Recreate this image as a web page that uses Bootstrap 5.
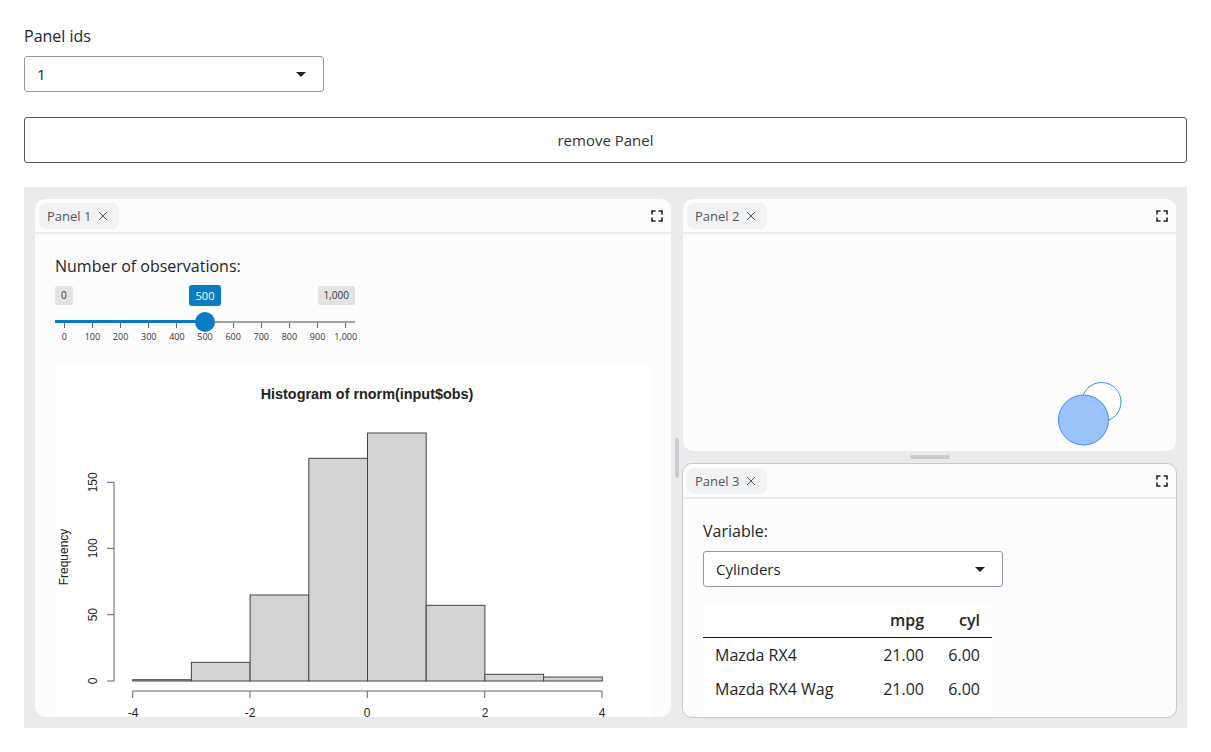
<!DOCTYPE html>
<html lang="en">
<head>
<meta charset="UTF-8">
<title>Panels</title>
<link rel="stylesheet" href="https://cdn.jsdelivr.net/npm/bootstrap@5.3.0/dist/css/bootstrap.min.css">
<style>
    html, body { height: 100%; }
    body {
        font-family: "Open Sans", "Liberation Sans", sans-serif;
        font-size: 16px;
        color: #212529;
        background: #fff;
        overflow: hidden;
    }
    .page-wrap { padding: 24px; }
    .field-label { font-size: 16px; line-height: 24px; margin-bottom: 8px; display: block; }
    .dd-select {
        width: 300px;
        height: 36px;
        font-size: 15px;
        line-height: 20px;
        padding: 6px 36px 6px 12px;
        border: 1px solid #8f9aa6;
        border-radius: 3px;
        color: #212529;
        background-image: url("data:image/svg+xml,%3csvg xmlns='http://www.w3.org/2000/svg' viewBox='0 0 10 5'%3e%3cpath fill='%23222' d='M0 0h10L5 5z'/%3e%3c/svg%3e");
        background-position: right 17px center;
        background-size: 10px 5px;
    }
    .remove-btn {
        height: 46px;
        margin: 25px 0 24px;
        font-size: 15px;
        font-weight: 500;
        color: #333;
        background: #fff;
        border: 1px solid #555;
        border-radius: 3px;
    }
    .dock {
        height: 541px;
        padding: 12px 11px 11px;
        gap: 12px;
        background: #e9ebed;
    }
    .dock-col-left { width: 636px; }
    .dock-col-right { width: 493px; gap: 12px; }
    .pane {
        background: #fcfcfc;
        border-radius: 10px;
        overflow: hidden;
        min-height: 0;
    }
    .pane-top { height: 252px; flex: none; }
    .pane-bottom { flex: 1; border: 1px solid #c9c9c9; margin: 0 -1px -1px -1px; }
    .pane-head {
        height: 35px;
        flex: none;
        padding: 4px 8px 0 4px;
        border-bottom: 2px solid #e9ebed;
    }
    .pane-tab {
        height: 26px;
        padding: 2px 11px 0 8px;
        gap: 7px;
        font-size: 13px;
        color: #555;
        background: #f1f2f3;
        border-radius: 7px;
    }
    .pane-tab svg { margin-top: -3px; }
    .pane-body { padding: 20px; min-height: 0; }
    .obs-label { font-size: 16px; line-height: 24px; margin: 0 0 7px; }
    .range-box { width: 300px; position: relative; }
    .range-ends { height: 21px; padding-top: 1px; }
    .range-end {
        font-size: 10px;
        line-height: 19px;
        height: 19px;
        padding: 0 6px;
        color: #333;
        background: #e3e3e3;
        border-radius: 2px;
    }
    .range-value {
        position: absolute;
        top: 0;
        left: 134px;
        width: 32px;
        height: 21px;
        font-size: 11px;
        font-weight: 500;
        line-height: 21px;
        text-align: center;
        color: #fff;
        background: #0a7cc4;
        border-radius: 3px;
    }
    .range-track { height: 3px; margin-top: 14px; background: linear-gradient(#a3a3a3, #a3a3a3) center / 100% 2px no-repeat; position: relative; }
    .range-fill { width: 50%; height: 100%; background: #0a7cc4; }
    .range-knob {
        position: absolute;
        left: 140px;
        top: -8.5px;
        width: 20px;
        height: 20px;
        border-radius: 50%;
        background: #0a7cc4;
    }
    .range-ticks { margin: 0 9.3px; height: 24px; }
    .range-tick { width: 0; position: relative; display: flex; flex-direction: column; align-items: center; }
    .range-tick i { display: block; width: 1px; height: 5px; flex: none; background: #666; }
    .range-tick span { font-size: 9px; line-height: 12px; margin-top: 3px; color: #333; white-space: nowrap; }
    .plot-box { width: 596px; height: 400px; margin-top: 17px; background: #fff; flex: none; }
    .plot-box svg { display: block; }
    .plot-box text { font-family: "Liberation Sans", Arial, sans-serif; fill: #222; }
    .var-label { font-size: 16px; line-height: 24px; margin: 0 0 8px; }
    .cars-wrap { width: 289px; margin-top: 16px; background: #fff; }
    .cars-table { margin: 0; font-size: 16px; table-layout: fixed; --bs-table-bg: #fff; }
    .cars-table th, .cars-table td {
        padding: 1px 12px 0;
        height: 34px;
        border: 0;
        vertical-align: middle;
        white-space: nowrap;
    }
    .cars-table th { font-weight: 600; border-bottom: 1px solid #111; padding-top: 0; }
    .col-name { width: 161px; }
    .col-mpg { width: 72px; }
    .col-cyl { width: 56px; }
    .circles-svg { margin: 0 52px 3px 0; }
    .sash-v, .sash-h { position: absolute; background: #c9cbce; border-radius: 2px; }
    .sash-v { left: 675px; top: 438px; width: 4px; height: 40px; }
    .sash-h { left: 910px; top: 455px; width: 40px; height: 4px; }
    .max-icon { flex: none; margin-top: 7px; }
</style>
</head>
<body>
<div class="page-wrap">
    <label class="field-label" for="panelIds">Panel ids</label>
    <select class="form-select dd-select" id="panelIds">
        <option>1</option>
        <option>2</option>
        <option>3</option>
    </select>
    <button type="button" class="btn remove-btn w-100 d-block">remove Panel</button>

    <div class="dock d-flex">
        <div class="dock-col-left d-flex">
            <div class="pane d-flex flex-column w-100">
                <div class="pane-head d-flex justify-content-between align-items-start">
                    <span class="pane-tab d-inline-flex align-items-center">Panel 1
                        <svg width="10" height="10" viewBox="0 0 10 10"><path d="M1 1l8 8M9 1l-8 8" stroke="#555" fill="none"/></svg>
                    </span>
                    <svg class="max-icon" width="12" height="12" viewBox="0 0 12 12"><path d="M1 4.5V1h3.5M7.5 1H11v3.5M11 7.5V11H7.5M4.5 11H1V7.5" stroke="#222" stroke-width="1.6" fill="none"/></svg>
                </div>
                <div class="pane-body">
                    <p class="obs-label">Number of observations:</p>
                    <div class="range-box">
                        <div class="range-ends d-flex justify-content-between align-items-start">
                            <span class="range-end">0</span>
                            <span class="range-end">1,000</span>
                        </div>
                        <span class="range-value">500</span>
                        <div class="range-track">
                            <div class="range-fill"></div>
                            <div class="range-knob"></div>
                        </div>
                        <div class="range-ticks d-flex justify-content-between">
                            <div class="range-tick"><i></i><span>0</span></div>
                            <div class="range-tick"><i></i><span>100</span></div>
                            <div class="range-tick"><i></i><span>200</span></div>
                            <div class="range-tick"><i></i><span>300</span></div>
                            <div class="range-tick"><i></i><span>400</span></div>
                            <div class="range-tick"><i></i><span>500</span></div>
                            <div class="range-tick"><i></i><span>600</span></div>
                            <div class="range-tick"><i></i><span>700</span></div>
                            <div class="range-tick"><i></i><span>800</span></div>
                            <div class="range-tick"><i></i><span>900</span></div>
                            <div class="range-tick"><i></i><span>1,000</span></div>
                        </div>
                    </div>
                    <div class="plot-box">
                        <svg width="596" height="400" viewBox="55 364 596 400">
                            <text x="367" y="399" text-anchor="middle" font-size="14.4" font-weight="700">Histogram of rnorm(input$obs)</text>
                            <g fill="#d3d3d3" stroke="#444" stroke-width="1">
                                <rect x="132.7" y="679.7" width="58.7" height="1.3"/>
                                <rect x="191.4" y="662.3" width="58.7" height="18.7"/>
                                <rect x="250.1" y="595" width="58.7" height="86"/>
                                <rect x="308.8" y="458.3" width="58.7" height="222.7"/>
                                <rect x="367.5" y="433" width="58.7" height="248"/>
                                <rect x="426.2" y="605.3" width="58.7" height="75.7"/>
                                <rect x="484.9" y="674.3" width="58.7" height="6.7"/>
                                <rect x="543.6" y="677" width="58.7" height="4"/>
                            </g>
                            <g stroke="#666" stroke-width="1" fill="none">
                                <path d="M114 681V482.3M107 681h7M107 614.7h7M107 548.3h7M107 482.3h7"/>
                                <path d="M132.7 691H602M132.7 691v7M250 691v7M367.3 691v7M484.7 691v7M602 691v7"/>
                            </g>
                            <g font-size="12" text-anchor="middle">
                                <text x="133" y="717">-4</text>
                                <text x="250" y="717">-2</text>
                                <text x="367" y="717">0</text>
                                <text x="485" y="717">2</text>
                                <text x="602" y="717">4</text>
                                <text transform="translate(97 681) rotate(-90)">0</text>
                                <text transform="translate(97 614.7) rotate(-90)">50</text>
                                <text transform="translate(97 548.3) rotate(-90)">100</text>
                                <text transform="translate(97 482.3) rotate(-90)">150</text>
                                <text transform="translate(68 557) rotate(-90)">Frequency</text>
                            </g>
                        </svg>
                    </div>
                </div>
            </div>
        </div>

        <div class="dock-col-right d-flex flex-column">
            <div class="pane pane-top d-flex flex-column">
                <div class="pane-head d-flex justify-content-between align-items-start">
                    <span class="pane-tab d-inline-flex align-items-center">Panel 2
                        <svg width="10" height="10" viewBox="0 0 10 10"><path d="M1 1l8 8M9 1l-8 8" stroke="#555" fill="none"/></svg>
                    </span>
                    <svg class="max-icon" width="12" height="12" viewBox="0 0 12 12"><path d="M1 4.5V1h3.5M7.5 1H11v3.5M11 7.5V11H7.5M4.5 11H1V7.5" stroke="#222" stroke-width="1.6" fill="none"/></svg>
                </div>
                <div class="flex-grow-1 d-flex justify-content-end align-items-end">
                    <svg class="circles-svg" width="66" height="66" viewBox="0 0 66 66">
                        <circle cx="43.5" cy="20" r="19.5" fill="#fff" stroke="#3b8df2"/>
                        <circle cx="25.5" cy="38" r="25" fill="#9ac3fb" stroke="#3b8df2"/>
                    </svg>
                </div>
            </div>
            <div class="pane pane-bottom d-flex flex-column">
                <div class="pane-head d-flex justify-content-between align-items-start">
                    <span class="pane-tab d-inline-flex align-items-center">Panel 3
                        <svg width="10" height="10" viewBox="0 0 10 10"><path d="M1 1l8 8M9 1l-8 8" stroke="#555" fill="none"/></svg>
                    </span>
                    <svg class="max-icon" width="12" height="12" viewBox="0 0 12 12"><path d="M1 4.5V1h3.5M7.5 1H11v3.5M11 7.5V11H7.5M4.5 11H1V7.5" stroke="#222" stroke-width="1.6" fill="none"/></svg>
                </div>
                <div class="pane-body">
                    <label class="var-label d-block" for="variable">Variable:</label>
                    <select class="form-select dd-select" id="variable">
                        <option>Cylinders</option>
                        <option>Transmission</option>
                        <option>Gears</option>
                    </select>
                    <div class="cars-wrap">
                        <table class="table cars-table">
                            <colgroup><col class="col-name"><col class="col-mpg"><col class="col-cyl"></colgroup>
                            <thead>
                                <tr><th></th><th class="text-end">mpg</th><th class="text-end">cyl</th></tr>
                            </thead>
                            <tbody>
                                <tr><td>Mazda RX4</td><td class="text-end">21.00</td><td class="text-end">6.00</td></tr>
                                <tr><td>Mazda RX4 Wag</td><td class="text-end">21.00</td><td class="text-end">6.00</td></tr>
                                <tr><td>Datsun 710</td><td class="text-end">22.80</td><td class="text-end">4.00</td></tr>
                            </tbody>
                        </table>
                    </div>
                </div>
            </div>
        </div>
    </div>
</div>
<div class="sash-v"></div>
<div class="sash-h"></div>
<script src="https://cdn.jsdelivr.net/npm/bootstrap@5.3.0/dist/js/bootstrap.bundle.min.js"></script>
</body>
</html>
